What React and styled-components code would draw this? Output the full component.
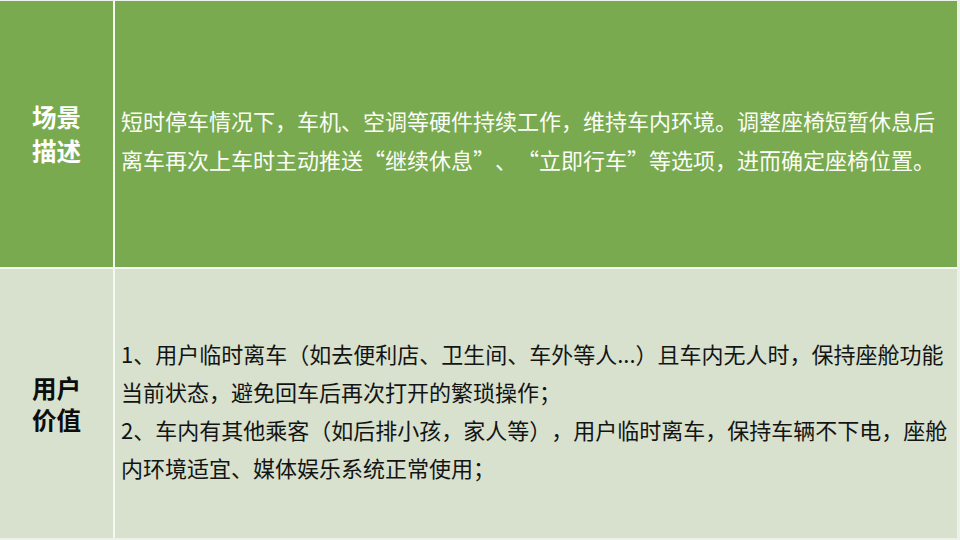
import React from 'react'
import styled, { createGlobalStyle } from 'styled-components'

const Global = createGlobalStyle`
  html, body { margin: 0; padding: 0; background: #eef1ea; }
  body { font-family: "Noto Sans CJK SC", "Noto Sans", sans-serif; }
`

const Table = styled.div`
  margin: 1px 3px 2px 0;
  height: 537px;
  display: grid;
  grid-template-columns: 113px 1fr;
  grid-template-rows: 266px 1fr;
  gap: 2px;
  background: #f6f8f2;
`

const Label = styled.div`
  display: flex;
  align-items: center;
  justify-content: center;
  background: ${p => (p.dark ? '#79aa4f' : '#d7e1cd')};
  color: ${p => (p.dark ? '#ffffff' : '#0d0d0d')};
  font-size: 24.5px;
  font-weight: 700;
  line-height: ${p => (p.dark ? '34px' : '32px')};
  text-align: center;
`

const Body = styled.div`
  display: flex;
  align-items: center;
  padding: 12px 4px 0 6px;
  background: ${p => (p.dark ? '#79aa4f' : '#d7e1cd')};
  color: ${p => (p.dark ? '#fbfdf8' : '#141414')};
  font-size: 22px;
  line-height: ${p => (p.dark ? '39px' : '38px')};
  text-spacing-trim: space-all;
  white-space: nowrap;
`

const Para = styled.p`
  margin: 0;
`

export default function App() {
  return (
    <>
      <Global />
      <Table>
        <Label dark>场景<br />描述</Label>
        <Body dark>
          <Para>
            短时停车情况下，车机、空调等硬件持续工作，维持车内环境。调整座椅短暂休息后<br />
            离车再次上车时主动推送“继续休息”、“立即行车”等选项，进而确定座椅位置。
          </Para>
        </Body>
        <Label>用户<br />价值</Label>
        <Body>
          <Para>
            1、用户临时离车（如去便利店、卫生间、车外等人...）且车内无人时，保持座舱功能<br />
            当前状态，避免回车后再次打开的繁琐操作；<br />
            2、车内有其他乘客（如后排小孩，家人等），用户临时离车，保持车辆不下电，座舱<br />
            内环境适宜、媒体娱乐系统正常使用；
          </Para>
        </Body>
      </Table>
    </>
  )
}
